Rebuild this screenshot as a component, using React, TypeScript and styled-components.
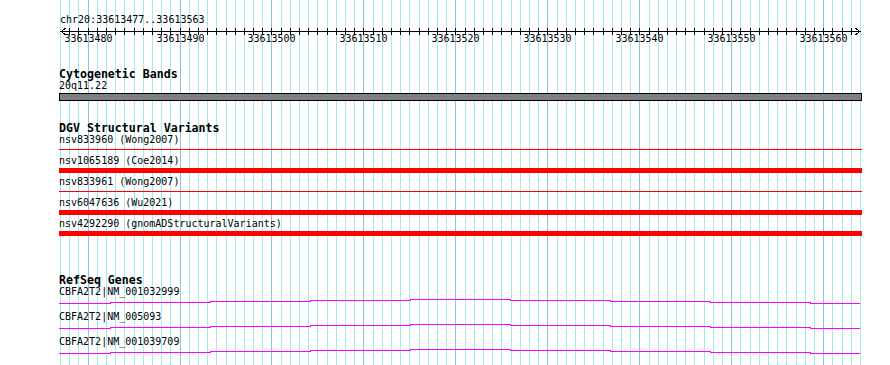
import styled, { createGlobalStyle } from "styled-components"

const START = 33613477
const END = 33613563
const VIEW_LEFT = 60.5
const VIEW_WIDTH = 800
const CONTENT_LEFT = 59
const BP_COUNT = END - START + 1

const variants = [
  { name: "nsv833960 (Wong2007)", thick: false },
  { name: "nsv1065189 (Coe2014)", thick: true },
  { name: "nsv833961 (Wong2007)", thick: false },
  { name: "nsv6047636 (Wu2021)", thick: true },
  { name: "nsv4292290 (gnomADStructuralVariants)", thick: true },
]

const genes = ["CBFA2T2|NM_001032999", "CBFA2T2|NM_005093", "CBFA2T2|NM_001039709"]

// pixel column of each base boundary
const columns = Array.from({ length: BP_COUNT + 1 }, (_, i) => ({
  pos: START + i,
  x: Math.floor(VIEW_LEFT + (i * VIEW_WIDTH) / BP_COUNT),
}))

const genePath =
  "M0,5.5 H51 V4.5 H151 V3.5 H251 V2.5 H351 V1.5 H451 V2.5 H551 V3.5 H651 V4.5 H751 V5.5 H801"

export default function App() {
  return (
    <>
      <GlobalStyle />
      <Page>
        <GridLayer width={890} height={365}>
          {columns.map((c) => (
            <line
              key={c.pos}
              x1={c.x + 0.5}
              x2={c.x + 0.5}
              y1={0}
              y2={365}
              stroke={c.pos % 10 === 0 ? "#8cc2e8" : "#a6eaf0"}
              strokeWidth={1}
            />
          ))}
        </GridLayer>

        <Content>
          <RulerBlock>
            <LocationLabel>
              chr20:{START}..{END}
            </LocationLabel>
            <RulerSvg width={803} height={20}>
              <path d="M2,5.5 H801" stroke="#000" strokeWidth={1} />
              <polyline points="7,2 2,5.5 7,9" fill="none" stroke="#000" strokeWidth={1} />
              <polyline points="796,2 801,5.5 796,9" fill="none" stroke="#000" strokeWidth={1} />
              {columns.slice(1, -1).map((c) => (
                <line
                  key={c.pos}
                  x1={c.x - CONTENT_LEFT + 0.5}
                  x2={c.x - CONTENT_LEFT + 0.5}
                  y1={2}
                  y2={9}
                  stroke="#000"
                  strokeWidth={1}
                />
              ))}
              {columns
                .filter((c) => c.pos % 10 === 0)
                .map((c) => (
                  <TickLabel key={c.pos} x={c.x - CONTENT_LEFT + 0.5} y={16} textAnchor="middle">
                    {c.pos}
                  </TickLabel>
                ))}
            </RulerSvg>
          </RulerBlock>

          <Track $gap={22}>
            <TrackTitle>Cytogenetic Bands</TrackTitle>
            <FeatureLabel>20q11.22</FeatureLabel>
            <CytoBar />
          </Track>

          <Track $gap={21}>
            <TrackTitle>DGV Structural Variants</TrackTitle>
            {variants.map((v) => (
              <div key={v.name}>
                <FeatureLabel>{v.name}</FeatureLabel>
                <VariantLane $thick={v.thick}>
                  <VariantGlyph $thick={v.thick} />
                </VariantLane>
              </div>
            ))}
          </Track>

          <Track $gap={35}>
            <TrackTitle>RefSeq Genes</TrackTitle>
            {genes.map((g) => (
              <div key={g}>
                <FeatureLabel>{g}</FeatureLabel>
                <GeneSvg width={803} height={13}>
                  <path d={genePath} fill="none" stroke="#ff00ff" strokeWidth={1} />
                </GeneSvg>
              </div>
            ))}
          </Track>
        </Content>
      </Page>
    </>
  )
}

const GlobalStyle = createGlobalStyle`
  body {
    margin: 0;
    background: #fff;
  }
`

const Page = styled.div`
  position: relative;
  width: 890px;
  height: 365px;
  overflow: hidden;
  background: #fff;
  font-family: "DejaVu Sans Mono", "Liberation Mono", monospace;
  color: #000;
`

const GridLayer = styled.svg`
  position: absolute;
  top: 0;
  left: 0;
  display: block;
  shape-rendering: crispEdges;
`

const Content = styled.div`
  position: relative;
  padding-left: ${CONTENT_LEFT}px;
  width: 803px;
`

const RulerBlock = styled.div`
  padding-top: 14px;
`

const LocationLabel = styled.div`
  font-size: 10px;
  line-height: 12px;
  height: 12px;
  padding-left: 1px;
  white-space: nowrap;
`

const RulerSvg = styled.svg`
  display: block;
  shape-rendering: crispEdges;
`

const TickLabel = styled.text`
  font-family: "DejaVu Sans Mono", "Liberation Mono", monospace;
  font-size: 10px;
  fill: #000;
`

const Track = styled.div<{ $gap: number }>`
  margin-top: ${(p) => p.$gap}px;
`

const TrackTitle = styled.div`
  font-size: 11.6px;
  font-weight: bold;
  line-height: 12px;
  height: 12px;
  white-space: nowrap;
`

const FeatureLabel = styled.div`
  font-size: 10px;
  line-height: 12px;
  height: 12px;
  white-space: nowrap;
`

const CytoBar = styled.div`
  box-sizing: border-box;
  margin-top: 1px;
  height: 8px;
  width: 803px;
  border: 1px solid #000;
  background: #808080;
`

const VariantLane = styled.div<{ $thick: boolean }>`
  box-sizing: border-box;
  height: 9px;
  padding-top: ${(p) => (p.$thick ? 1 : 3)}px;
`

const VariantGlyph = styled.div<{ $thick: boolean }>`
  width: 803px;
  height: ${(p) => (p.$thick ? 5 : 1)}px;
  background: #ff0000;
`

const GeneSvg = styled.svg`
  display: block;
  shape-rendering: crispEdges;
`
